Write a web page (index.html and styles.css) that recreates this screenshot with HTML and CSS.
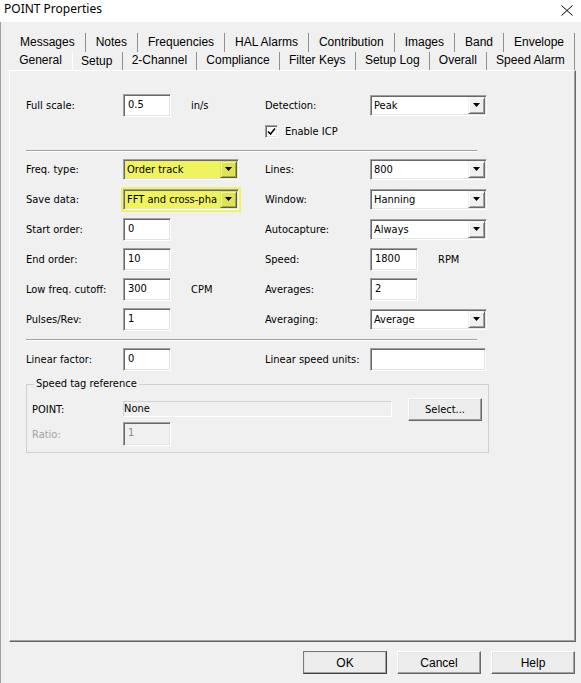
FILE: index.html
```html
<!DOCTYPE html>
<html>
<head>
<meta charset="utf-8">
<title>POINT Properties</title>
<link rel="stylesheet" href="styles.css">
</head>
<body>
<div class="window">
  <div class="titlebar">
    <span class="title">POINT Properties</span>
    <svg class="close" width="12" height="11" viewBox="0 0 12 11"><path d="M0.5 0.5 L11.5 10.5 M11.5 0.5 L0.5 10.5" stroke="#000" stroke-width="1" fill="none"/></svg>
  </div>
  <div class="dialog">
    <div class="tabs">
      <div class="tabrow">
        <div class="tab">Messages</div>
        <div class="tab">Notes</div>
        <div class="tab">Frequencies</div>
        <div class="tab">HAL Alarms</div>
        <div class="tab">Contribution</div>
        <div class="tab">Images</div>
        <div class="tab">Band</div>
        <div class="tab">Envelope</div>
      </div>
      <div class="tabrow">
        <div class="tab nosep">General</div>
        <div class="tab sel">Setup</div>
        <div class="tab">2-Channel</div>
        <div class="tab">Compliance</div>
        <div class="tab">Filter Keys</div>
        <div class="tab">Setup Log</div>
        <div class="tab">Overall</div>
        <div class="tab">Speed Alarm</div>
      </div>
    </div>

    <div class="panel">
      <div class="form form-top">
        <span class="lbl">Full scale:</span>
        <div class="fld"><span class="input">0.5</span><span class="unit">in/s</span></div>
        <span class="lbl">Detection:</span>
        <div class="fld"><span class="combo"><span class="val">Peak</span><span class="arrow"><svg width="7" height="4" viewBox="0 0 7 4"><polygon points="0,0 7,0 3.5,4" fill="#000"/></svg></span></span></div>
        <label class="check"><span class="box"><svg width="9" height="9" viewBox="0 0 9 9"><path d="M1 4.5 L3.5 7 L8 1.5" stroke="#000" stroke-width="1.6" fill="none"/></svg></span>Enable ICP</label>
      </div>

      <div class="sep sep-a"></div>

      <div class="form form-mid">
        <span class="lbl">Freq. type:</span>
        <div class="fld"><span class="combo narrow hl"><span class="val">Order track</span><span class="arrow"><svg width="7" height="4" viewBox="0 0 7 4"><polygon points="0,0 7,0 3.5,4" fill="#000"/></svg></span></span></div>
        <span class="lbl">Lines:</span>
        <div class="fld"><span class="combo"><span class="val">800</span><span class="arrow"><svg width="7" height="4" viewBox="0 0 7 4"><polygon points="0,0 7,0 3.5,4" fill="#000"/></svg></span></span></div>

        <span class="lbl">Save data:</span>
        <div class="fld"><span class="combo narrow hl hl-wide"><span class="val">FFT and cross-pha</span><span class="arrow"><svg width="7" height="4" viewBox="0 0 7 4"><polygon points="0,0 7,0 3.5,4" fill="#000"/></svg></span></span></div>
        <span class="lbl">Window:</span>
        <div class="fld"><span class="combo"><span class="val">Hanning</span><span class="arrow"><svg width="7" height="4" viewBox="0 0 7 4"><polygon points="0,0 7,0 3.5,4" fill="#000"/></svg></span></span></div>

        <span class="lbl">Start order:</span>
        <div class="fld"><span class="input">0</span></div>
        <span class="lbl">Autocapture:</span>
        <div class="fld"><span class="combo"><span class="val">Always</span><span class="arrow"><svg width="7" height="4" viewBox="0 0 7 4"><polygon points="0,0 7,0 3.5,4" fill="#000"/></svg></span></span></div>

        <span class="lbl">End order:</span>
        <div class="fld"><span class="input">10</span></div>
        <span class="lbl">Speed:</span>
        <div class="fld"><span class="input">1800</span><span class="unit">RPM</span></div>

        <span class="lbl">Low freq. cutoff:</span>
        <div class="fld"><span class="input">300</span><span class="unit">CPM</span></div>
        <span class="lbl">Averages:</span>
        <div class="fld"><span class="input">2</span></div>

        <span class="lbl">Pulses/Rev:</span>
        <div class="fld"><span class="input">1</span></div>
        <span class="lbl">Averaging:</span>
        <div class="fld"><span class="combo"><span class="val">Average</span><span class="arrow"><svg width="7" height="4" viewBox="0 0 7 4"><polygon points="0,0 7,0 3.5,4" fill="#000"/></svg></span></span></div>
      </div>

      <div class="sep sep-b"></div>

      <div class="form form-bot">
        <span class="lbl">Linear factor:</span>
        <div class="fld"><span class="input">0</span></div>
        <span class="lbl">Linear speed units:</span>
        <div class="fld"><span class="input wide"></span></div>
      </div>

      <fieldset class="group">
        <legend>Speed tag reference</legend>
        <div class="group-grid">
          <span class="lbl">POINT:</span>
          <span class="readonly">None</span>
          <button class="btn btn-select">Select...</button>
          <span class="lbl disabled">Ratio:</span>
          <span class="input input-disabled">1</span>
        </div>
      </fieldset>
    </div>

    <div class="buttons">
      <button class="btn btn-main default">OK</button>
      <button class="btn btn-main">Cancel</button>
      <button class="btn btn-main">Help</button>
    </div>
  </div>
</div>
</body>
</html>
```

FILE: styles.css
```css
* { box-sizing: border-box; }

html, body {
  margin: 0;
  padding: 0;
}

body {
  width: 581px;
  height: 683px;
  overflow: hidden;
  background: #f0f0f0;
  color: #000;
  font-family: "DejaVu Sans Condensed", "DejaVu Sans", sans-serif;
  font-stretch: semi-condensed;
  font-size: 11px;
}

.window {
  width: 581px;
  height: 683px;
  display: flex;
  flex-direction: column;
}

/* Title bar */
.titlebar {
  height: 22px;
  background: #fff;
  display: flex;
  align-items: center;
  justify-content: space-between;
  padding: 0 8px 4px 4px;
  font-family: "Noto Sans", "Liberation Sans", sans-serif;
  font-size: 12px;
}
.title { line-height: 16px; }
.close { display: block; margin-top: 2px; }

/* Dialog body */
.dialog {
  flex: 1;
  border-left: 1px solid #a0a0a0;
  display: flex;
  flex-direction: column;
}

/* Tabs */
.tabs {
  margin: 11px 0 0 9px;
  width: 565px;
  font-family: "Liberation Sans", Arial, sans-serif;
  font-size: 12px;
}
.tabrow {
  display: flex;
}
.tabrow:first-child .tab { height: 19px; line-height: 19px; }
.tabrow:last-child .tab { height: 18px; line-height: 17px; }
.tab {
  flex: 1 1 auto;
  text-align: center;
  padding: 0 9px;
  border-right: 1px solid #8f8f8f;
  white-space: nowrap;
}
.tab.nosep { border-right-color: transparent; }
.tabrow:last-child .tab.sel {
  box-shadow: inset 1px 0 0 #fff;
  line-height: 19px;
}

/* Panel */
.panel {
  margin-left: 8px;
  width: 567px;
  height: 572px;
  border-top: 1px solid #fff;
  border-left: 1px solid #fff;
  border-right: 1px solid #696969;
  border-bottom: 1px solid #696969;
  box-shadow: inset -1px -1px 0 #a0a0a0;
  padding: 19px 0 0 16px;
}

.form {
  display: grid;
  grid-template-columns: 97px 142px 105px 1fr;
  grid-auto-rows: 30px;
  align-items: center;
}
.form-top { grid-template-rows: 30px 22px; }

.lbl { white-space: nowrap; }
.lbl.disabled { color: #a3a3a3; }

.fld {
  display: flex;
  align-items: center;
  gap: 20px;
}
.unit { white-space: nowrap; }

.check {
  grid-column: 3 / span 2;
  display: flex;
  align-items: center;
  gap: 7px;
}
.box {
  width: 13px;
  height: 13px;
  background: #fff;
  border: 1px solid;
  border-color: #a0a0a0 #fff #fff #a0a0a0;
  box-shadow: inset 1px 1px 0 #696969, inset -1px -1px 0 #e3e3e3;
  display: flex;
  align-items: center;
  justify-content: center;
}
.box svg { display: block; }

/* Sunken text inputs */
.input {
  display: block;
  width: 48px;
  height: 23px;
  background: #fff;
  border: 1px solid;
  border-color: #a0a0a0 #fff #fff #a0a0a0;
  box-shadow: inset 1px 1px 0 #696969, inset -1px -1px 0 #e3e3e3;
  padding: 3px 0 0 4px;
  line-height: 14px;
  white-space: nowrap;
}
.input.wide { width: 116px; }
.input-disabled {
  background: #f0f0f0;
  color: #8d8d8d;
  height: 24px;
}

/* Combo boxes */
.combo {
  display: flex;
  align-items: center;
  width: 117px;
  height: 21px;
  background: #fff;
  border: 1px solid;
  border-color: #a0a0a0 #fff #fff #a0a0a0;
  box-shadow: inset 1px 1px 0 #696969, inset -1px -1px 0 #e3e3e3;
  padding: 1px 1px 1px 2px;
}
.combo.narrow { width: 116px; }
.combo .val {
  flex: 1;
  overflow: hidden;
  white-space: nowrap;
  line-height: 15px;
  padding-left: 1px;
}
.arrow {
  flex: none;
  width: 17px;
  height: 17px;
  background: #f0f0f0;
  border: 1px solid;
  border-color: #f0f0f0 #696969 #696969 #f0f0f0;
  box-shadow: inset 1px 1px 0 #fff, inset -1px -1px 0 #a0a0a0;
  display: flex;
  align-items: center;
  justify-content: center;
}
.arrow svg { display: block; }

.combo.hl { background: #eef35e; }
.combo.hl .arrow { background: #dde257; border-color: #dde257 #5f6030 #5f6030 #dde257; box-shadow: inset 1px 1px 0 #f3f78a, inset -1px -1px 0 #a3a64a; }
.combo.hl-wide {
  box-shadow: inset 1px 1px 0 #696969, inset -1px -1px 0 #e3e3e3, 0 0 0 2px #eef35e;
}

/* Separators */
.sep {
  width: 451px;
  height: 2px;
  border-top: 1px solid #a0a0a0;
  border-bottom: 1px solid #fff;
}
.sep-a { margin: 8px 0 2px; }
.sep-b { margin: 5px 0 3px; }

/* Group box */
.group {
  margin: 3px 0 0 0;
  width: 463px;
  border: 1px solid #d0d0d0;
  padding: 5px 0 6px 5px;
  min-width: 0;
}
.group legend {
  padding: 0 2px;
  margin-left: 2px;
  line-height: 14px;
}
.group-grid {
  display: grid;
  grid-template-columns: 91px 285px 74px;
  grid-template-rows: 26px 24px;
  align-items: center;
}
.readonly {
  display: block;
  width: 269px;
  height: 16px;
  background: #f0f0f0;
  border: 1px solid;
  border-color: #d2d2d2 #fff #fff #d2d2d2;
  line-height: 14px;
  padding-left: 0;
}

/* Buttons */
.btn {
  font-family: "Liberation Sans", Arial, sans-serif;
  font-size: 12px;
  color: #000;
  background: #ededed;
  border: 1px solid;
  border-color: #fff #696969 #696969 #fff;
  box-shadow: inset -1px -1px 0 #a0a0a0, inset 1px 1px 0 #e3e3e3;
  padding: 0;
  margin: 0;
  height: 23px;
}
.btn-select {
  width: 74px;
  font-family: "DejaVu Sans Condensed", "DejaVu Sans", sans-serif;
  font-stretch: semi-condensed;
  font-size: 11px;
}

.buttons {
  display: flex;
  justify-content: flex-end;
  gap: 10px;
  margin-top: 9px;
  padding-right: 6px;
}
.btn-main { width: 84px; }
.btn.default { border-color: #7a7a7a #404040 #404040 #7a7a7a; }
```
